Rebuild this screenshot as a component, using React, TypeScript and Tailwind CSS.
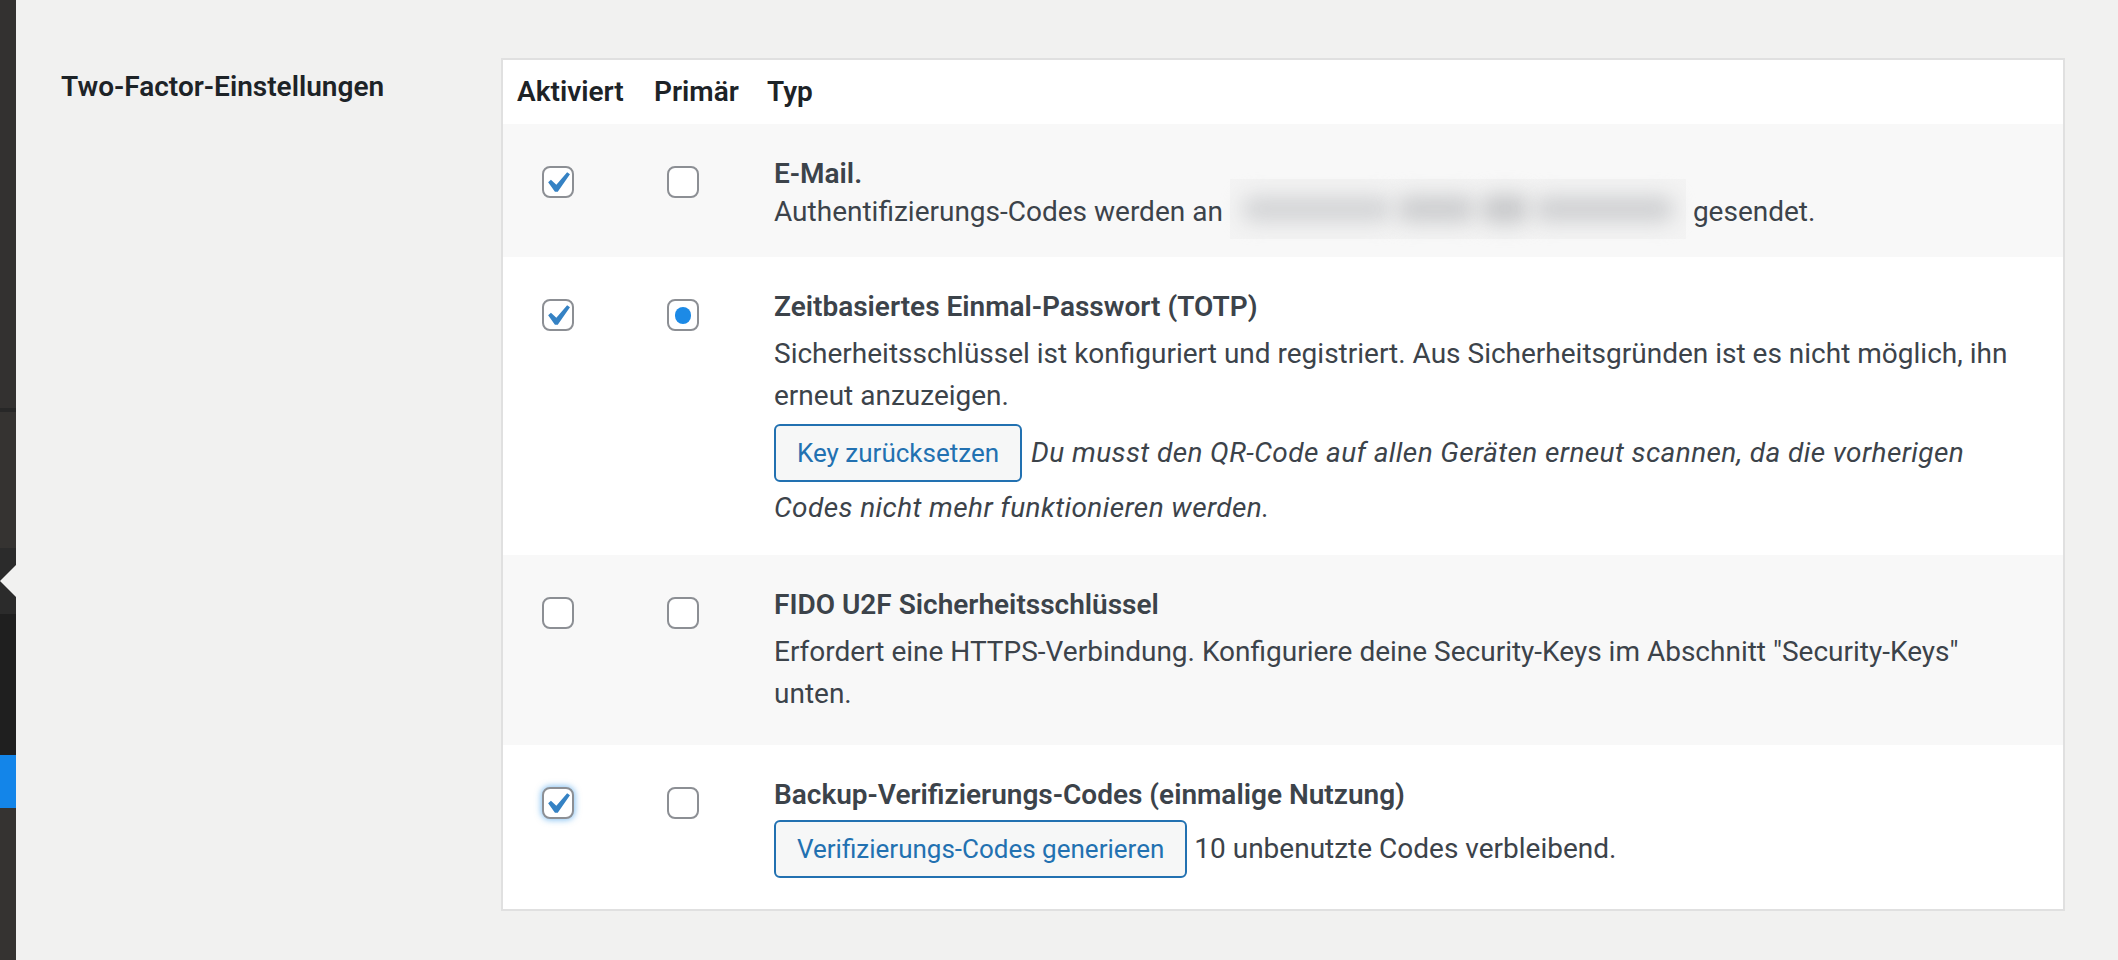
import React from 'react';

function Checkbox({ checked, focus }: { checked?: boolean; focus?: boolean }) {
  return (
    <span
      className={`relative block w-[32px] h-[32px] rounded-[8px] border-2 border-[#8c8f94] bg-white ${
        focus ? 'shadow-[0_0_6px_1px_rgba(30,140,230,0.55)]' : ''
      }`}
    >
      {checked && (
        <svg className="absolute left-[-8px] top-[-6px] w-[42px] h-[42px]" viewBox="0 0 20 20">
          <path fill="#3582c4" d="M14.83 4.89l1.34.94-5.81 8.38H9.02L5.78 9.67l1.34-1.25 2.57 2.4z" />
        </svg>
      )}
    </span>
  );
}

function Radio({ checked }: { checked?: boolean }) {
  return (
    <span className="flex w-[32px] h-[32px] items-center justify-center rounded-[8px] border-2 border-[#8c8f94] bg-white">
      {checked && <span className="block w-[16px] h-[17px] rounded-full bg-[#1c8ae6]" />}
    </span>
  );
}

function WpButton({ children, extra = '' }: { children: React.ReactNode; extra?: string }) {
  return (
    <span
      className={`inline-flex h-[58px] shrink-0 items-center rounded-[6px] border-2 border-[#2271b1] bg-[#f6f7f7] px-[21px] align-baseline text-[26px] text-[#2271b1] ${extra}`}
    >
      {children}
    </span>
  );
}

function Row({
  striped,
  enabled,
  primary,
  focus,
  children,
  pb,
}: {
  striped?: boolean;
  enabled?: boolean;
  primary?: boolean;
  focus?: boolean;
  children: React.ReactNode;
  pb: string;
}) {
  return (
    <div className={`flex items-start ${striped ? 'bg-[#f8f8f8]' : 'bg-white'}`}>
      <div className="w-[137px] shrink-0 pl-[39px] pt-[42px]">
        <Checkbox checked={enabled} focus={focus} />
      </div>
      <div className="w-[113px] shrink-0 pl-[27px] pt-[42px]">
        <Radio checked={primary} />
      </div>
      <div className={`flex-1 pl-[21px] pr-[20px] pt-[31px] ${pb}`}>{children}</div>
    </div>
  );
}

// blurred-out e-mail address
function Redacted() {
  return (
    <span className="mx-[7px] mb-[6px] flex h-[60px] w-[456px] shrink-0 items-center gap-[4px] bg-[#f3f3f3] px-[12px]">
      <span className="block h-[26px] w-[150px] rounded-full bg-[#d3d4d6] blur-[10px]" />
      <span className="block h-[28px] w-[80px] rounded-full bg-[#cdced0] blur-[10px]" />
      <span className="block h-[30px] w-[50px] rounded-full bg-[#c8c9cb] blur-[10px]" />
      <span className="block h-[26px] w-[140px] rounded-full bg-[#cfd0d2] blur-[10px]" />
    </span>
  );
}

export default function App() {
  return (
    <div className="flex min-h-[960px] bg-[#f1f1f0] font-['Roboto',sans-serif] text-[28px] text-[#3c434a]">
      {/* admin menu edge */}
      <div className="flex w-[16px] shrink-0 flex-col">
        <div className="h-[408px] bg-[#333130]" />
        <div className="h-[4px] bg-[#272727]" />
        <div className="h-[136px] bg-[#353331]" />
        <div className="flex h-[66px] items-center justify-end bg-[#2b2b2b]">
          <span className="block h-0 w-0 border-y-[16px] border-r-[16px] border-y-transparent border-r-[#f1f1f0]" />
        </div>
        <div className="h-[141px] bg-[#1f1f1f]" />
        <div className="h-[53px] bg-[#1385e9]" />
        <div className="flex-1 bg-[#353331]" />
      </div>

      <div className="flex flex-1 items-start pl-[45px] pr-[53px] pt-[58px]">
        <div className="w-[440px] shrink-0 pt-[11px] font-semibold leading-[36px] text-[#1d2327]">
          Two-Factor-Einstellungen
        </div>

        <div className="flex-1 border-2 border-[#e0e0e0] bg-white">
          <div className="flex h-[64px] items-center font-semibold text-[#1d2327]">
            <div className="w-[137px] shrink-0 pl-[14px]">Aktiviert</div>
            <div className="w-[113px] shrink-0 pl-[14px]">Primär</div>
            <div className="pl-[14px]">Typ</div>
          </div>

          <Row striped enabled pb="pb-[26px]">
            <div className="font-semibold leading-[38px]">E-Mail.</div>
            <div className="flex h-[38px] items-center whitespace-nowrap">
              <span>Authentifizierungs-Codes werden an</span>
              <Redacted />
              <span>gesendet.</span>
            </div>
          </Row>

          <Row enabled primary pb="pb-[26px]">
            <div className="font-semibold leading-[38px]">Zeitbasiertes Einmal-Passwort (TOTP)</div>
            <p className="mt-[7px] leading-[42px]">
              Sicherheitsschlüssel ist konfiguriert und registriert. Aus Sicherheitsgründen ist es nicht möglich, ihn
              erneut anzuzeigen.
            </p>
            <div className="mt-[7px] flex h-[63px] items-start">
              <WpButton>Key zurücksetzen</WpButton>
              <em className="ml-[9px] mt-[8px] whitespace-nowrap italic leading-[42px] tracking-[0.4px]">
                Du musst den QR-Code auf allen Geräten erneut scannen, da die vorherigen
              </em>
            </div>
            <em className="block italic leading-[42px] tracking-[0.4px]">Codes nicht mehr funktionieren werden.</em>
          </Row>

          <Row striped pb="pb-[30px]">
            <div className="font-semibold leading-[38px]">FIDO U2F Sicherheitsschlüssel</div>
            <p className="mt-[7px] leading-[42px]">
              Erfordert eine HTTPS-Verbindung. Konfiguriere deine Security-Keys im Abschnitt "Security-Keys" unten.
            </p>
          </Row>

          <Row enabled focus pb="pb-[31px]">
            <div className="font-semibold leading-[38px]">Backup-Verifizierungs-Codes (einmalige Nutzung)</div>
            <div className="mt-[6px] flex items-center">
              <WpButton>Verifizierungs-Codes generieren</WpButton>
              <span className="ml-[7px]">10 unbenutzte Codes verbleibend.</span>
            </div>
          </Row>
        </div>
      </div>
    </div>
  );
}
